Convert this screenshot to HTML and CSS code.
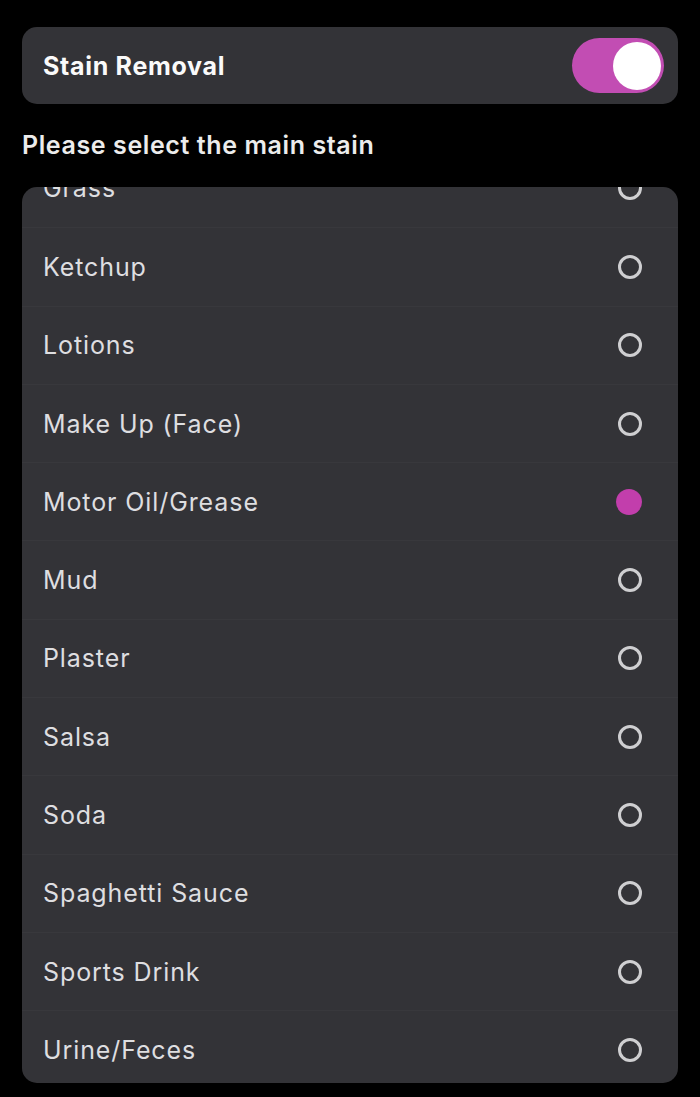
FILE: index.html
```html
<!DOCTYPE html>
<html>
<head>
<meta charset="utf-8">
<link rel="stylesheet" href="styles.css">
</head>
<body>
<div class="page">
  <div class="toggle-card">
    <span class="toggle-title">Stain Removal</span>
    <div class="switch"><div class="knob"></div></div>
  </div>
  <div class="prompt">Please select the main stain</div>
  <div class="list-card">
    <ul class="list">
      <li class="row"><span>Grass</span><span class="radio"></span></li>
      <li class="row"><span>Ketchup</span><span class="radio"></span></li>
      <li class="row"><span>Lotions</span><span class="radio"></span></li>
      <li class="row"><span>Make Up (Face)</span><span class="radio"></span></li>
      <li class="row"><span>Motor Oil/Grease</span><span class="radio checked"></span></li>
      <li class="row"><span>Mud</span><span class="radio"></span></li>
      <li class="row"><span>Plaster</span><span class="radio"></span></li>
      <li class="row"><span>Salsa</span><span class="radio"></span></li>
      <li class="row"><span>Soda</span><span class="radio"></span></li>
      <li class="row"><span>Spaghetti Sauce</span><span class="radio"></span></li>
      <li class="row"><span>Sports Drink</span><span class="radio"></span></li>
      <li class="row"><span>Urine/Feces</span><span class="radio"></span></li>
    </ul>
  </div>
</div>
</body>
</html>
```
FILE: styles.css
```css
html, body {
  margin: 0;
  padding: 0;
  background: #000;
}
body {
  font-family: "Inter", "Open Sans", sans-serif;
  color: #e4e4e6;
}
.page {
  padding: 27px 22px 0 22px;
}
.toggle-card {
  height: 77px;
  background: #333337;
  border-radius: 15px;
  display: flex;
  align-items: center;
  justify-content: space-between;
  padding: 0 14px 0 21px;
  box-sizing: border-box;
}
.toggle-title {
  font-size: 25px;
  font-weight: 700;
  color: #fafafa;
  letter-spacing: 0.7px;
}
.switch {
  width: 92px;
  height: 55px;
  border-radius: 28px;
  background: #c24db3;
  display: flex;
  align-items: center;
  justify-content: flex-end;
  padding: 0 3px;
  box-sizing: border-box;
}
.knob {
  width: 48px;
  height: 48px;
  border-radius: 50%;
  background: #fff;
}
.prompt {
  font-size: 25px;
  font-weight: 600;
  color: #ececec;
  margin: 27px 0 0 0;
  line-height: 28px;
  letter-spacing: 0.6px;
}
.list-card {
  margin-top: 28px;
  height: 896px;
  background: #333337;
  border-radius: 15px;
  overflow: hidden;
}
.list {
  list-style: none;
  margin: -38px 0 0 0;
  padding: 0;
}
.row {
  height: 78.3px;
  display: flex;
  align-items: center;
  justify-content: space-between;
  padding: 0 36px 0 21px;
  font-size: 25px;
  letter-spacing: 0.9px;
  color: #dedee0;
  border-top: 1px solid #38383c;
  box-sizing: border-box;
}
.row:first-child {
  border-top: none;
}
.radio {
  width: 24px;
  height: 24px;
  border-radius: 50%;
  border: 3px solid #cfcfd1;
  box-sizing: border-box;
}
.radio.checked {
  border: none;
  width: 26px;
  height: 26px;
  background: #c23eac;
}
```
